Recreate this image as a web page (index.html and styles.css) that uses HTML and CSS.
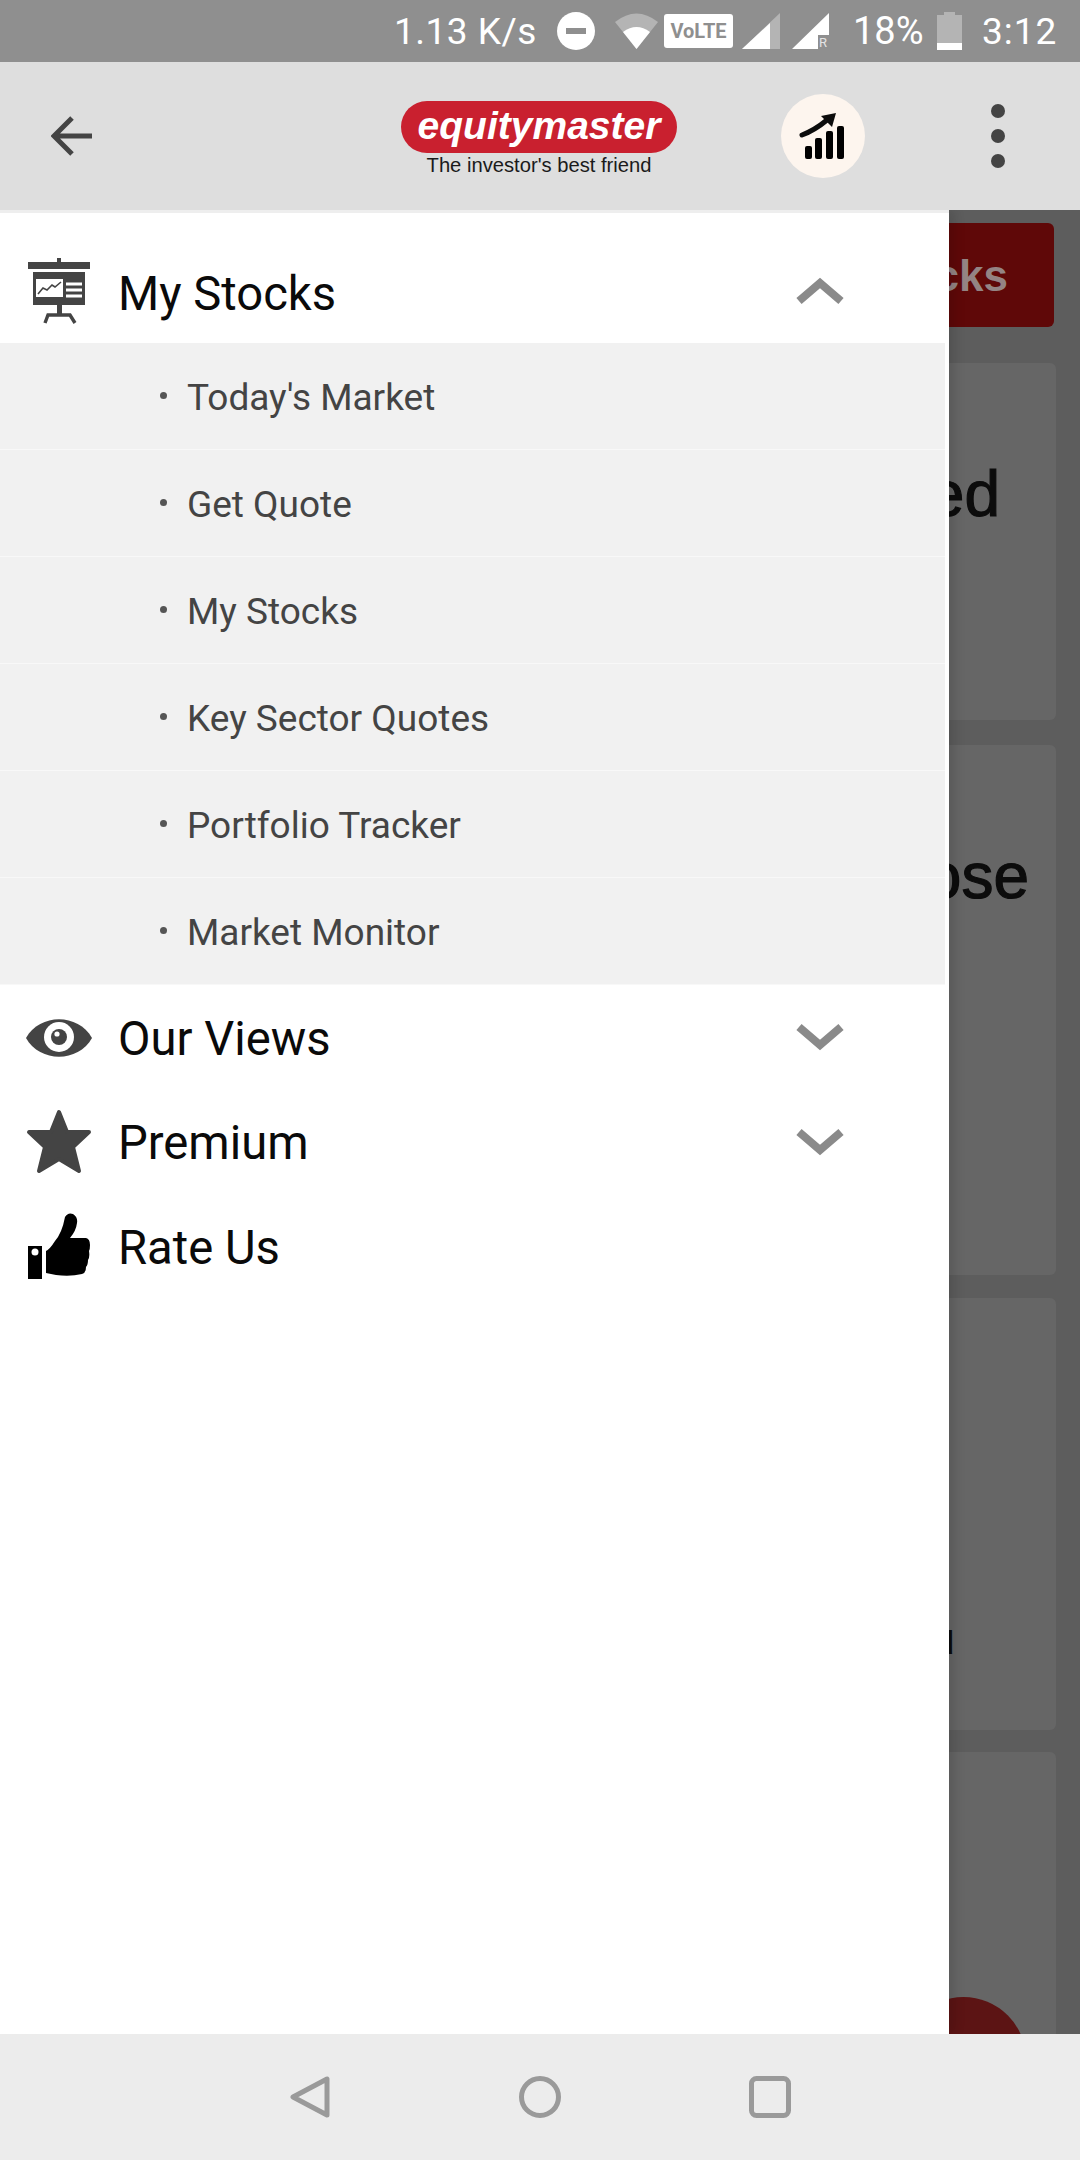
FILE: index.html
```html
<!DOCTYPE html>
<html lang="en">
<head>
 <meta charset="UTF-8">
 <meta name="viewport" content="width=device-width, initial-scale=1.0">
 <title>Equitymaster</title>
 <link rel="stylesheet" href="styles.css">
</head>
<body>
 <div class="status-bar">
  <span class="speed">1.13 K/s</span>
  <svg class="st-dnd" width="38" height="38" viewBox="0 0 38 38"><circle cx="19" cy="19" r="19" fill="#fff"/><rect x="9" y="16" width="20" height="6" fill="#8f8f8f"/></svg>
  <svg class="st-wifi" width="43" height="36" viewBox="0 0 43 36"><path d="M0 9 Q21.5 -8 43 9 L21.5 36 Z" fill="#b4b4b4"/><path d="M8 19 Q21.5 9 35 19 L21.5 36 Z" fill="#fff"/></svg>
  <span class="st-volte">VoLTE</span>
  <svg class="st-sig" width="38" height="36" viewBox="0 0 38 36"><path d="M38 0 V36 H0 Z" fill="#b4b4b4"/><path d="M28 10 V36 H0 Z" fill="#fff"/></svg>
  <svg class="st-sig2" width="37" height="36" viewBox="0 0 37 36"><path d="M37 0 V22 H26 V36 H0 Z" fill="#fff"/><text x="27" y="34" font-size="13" fill="#e4e4e4" font-family="Roboto, sans-serif">R</text></svg>
  <span class="st-pct">18%</span>
  <svg class="st-batt" width="25" height="38" viewBox="0 0 25 38"><rect x="7" y="0" width="11" height="4" fill="#b4b4b4"/><rect x="0" y="3" width="25" height="28" fill="#b4b4b4"/><rect x="0" y="31" width="25" height="7" fill="#fff"/></svg>
  <span class="st-time">3:12</span>
 </div>

 <div class="header">
  <svg class="back" width="42" height="42" viewBox="0 0 42 42"><path d="M41 21 H4 M21 3 L3 21 L21 39" fill="none" stroke="#444" stroke-width="5"/></svg>
  <div class="logo">
   <div class="logo-pill">equitymaster</div>
   <div class="logo-tag">The investor's best friend</div>
  </div>
  <div class="chart-btn">
   <svg width="48" height="48" viewBox="0 0 48 48"><path d="M3 23 Q16 18 28 8" fill="none" stroke="#0c0c0c" stroke-width="5" stroke-linecap="round"/><path d="M22 4 L37 1 L33 15 Z" fill="#0c0c0c"/><rect x="6" y="34" width="7" height="13" rx="2"/><rect x="16" y="26" width="7" height="21" rx="2"/><rect x="27" y="19" width="7" height="28" rx="2"/><rect x="38" y="14" width="7" height="33" rx="2"/></svg>
  </div>
  <div class="dots"><i></i><i></i><i></i></div>
 </div>

 <div class="page">
  <div class="page-btn"><span>My Stocks</span></div>
  <div class="card card-a"><span class="card-title">Viewed</span></div>
  <div class="card card-b"><span class="card-title">Choose</span></div>
  <div class="card card-c"><span class="card-small">Menu</span></div>
  <div class="card card-d"></div>
  <div class="fab"></div>

  <div class="drawer">
   <div class="item item-open">
    <svg class="item-icon" width="62" height="66" viewBox="0 0 62 66">
     <rect x="29" y="0" width="4" height="5" fill="#444"/>
     <rect x="0" y="4" width="62" height="7" fill="#444"/>
     <rect x="5" y="14" width="52" height="33" fill="#444"/>
     <rect x="8" y="21" width="27" height="18" fill="#fff"/>
     <path d="M10 36 L15 30 L19 32 L24 27 L27 29 L33 24" fill="none" stroke="#444" stroke-width="1.6"/>
     <path d="M38 26 H54 M38 32 H54 M38 38 H54" stroke="#fff" stroke-width="3"/>
     <rect x="29" y="47" width="5" height="10" fill="#444"/>
     <path d="M17 65 L20 57 H42 L47 65" fill="none" stroke="#444" stroke-width="3.4"/>
    </svg>
    <span class="item-label">My Stocks</span>
    <svg class="chev" width="48" height="28" viewBox="0 0 48 28"><path d="M3 24 L24 6 L45 24" fill="none" stroke="#8a8a8a" stroke-width="8"/></svg>
   </div>
   <div class="sub">
    <div class="sub-row"><span>Today's Market</span></div>
    <div class="sub-row"><span>Get Quote</span></div>
    <div class="sub-row"><span>My Stocks</span></div>
    <div class="sub-row"><span>Key Sector Quotes</span></div>
    <div class="sub-row"><span>Portfolio Tracker</span></div>
    <div class="sub-row"><span>Market Monitor</span></div>
   </div>
   <div class="item item-views">
    <svg class="item-icon" width="66" height="38" viewBox="0 0 66 38">
     <path d="M0 19 C14 -6 52 -6 66 19 C52 44 14 44 0 19 Z" fill="#444"/>
     <circle cx="33" cy="18" r="15" fill="#fff"/>
     <circle cx="33" cy="18" r="8" fill="#444"/>
     <circle cx="31" cy="15" r="2.6" fill="#fff"/>
    </svg>
    <span class="item-label">Our Views</span>
    <svg class="chev" width="48" height="28" viewBox="0 0 48 28"><path d="M3 4 L24 22 L45 4" fill="none" stroke="#8a8a8a" stroke-width="8"/></svg>
   </div>
   <div class="item">
    <svg class="item-icon star" width="66" height="66" viewBox="0 0 66 66">
     <path d="M33 3 L41 23 H63 L47 38 L53 62 L33 50 L13 62 L19 38 L3 23 H25 Z" fill="#444" stroke="#444" stroke-width="4" stroke-linejoin="round"/>
    </svg>
    <span class="item-label">Premium</span>
    <svg class="chev" width="48" height="28" viewBox="0 0 48 28"><path d="M3 4 L24 22 L45 4" fill="none" stroke="#8a8a8a" stroke-width="8"/></svg>
   </div>
   <div class="item">
    <svg class="item-icon thumb" width="62" height="66" viewBox="0 0 62 66">
     <rect x="0" y="33" width="14" height="33" fill="#000"/>
     <circle cx="7" cy="39" r="3.5" fill="#fff"/>
     <path d="M18 60 V38 Q22 36 27 28 Q34 20 37 4 Q40 -1 45 1 Q50 4 49 10 Q48 18 42 25 H58 Q62 26 62 32 Q62 36 61 38 Q62 44 60 47 Q60 52 58 54 Q58 60 54 61 Q42 64 28 62 Z" fill="#000"/>
    </svg>
    <span class="item-label">Rate Us</span>
   </div>
  </div>
 </div>

 <div class="nav-bar">
  <svg width="40" height="42" viewBox="0 0 40 42"><path d="M3 21 L37 3 V39 Z" fill="none" stroke="#9a9a9a" stroke-width="5" stroke-linejoin="round"/></svg>
  <svg width="42" height="42" viewBox="0 0 42 42"><circle cx="21" cy="21" r="18.5" fill="none" stroke="#9a9a9a" stroke-width="5"/></svg>
  <svg width="42" height="42" viewBox="0 0 42 42"><rect x="2.500" y="2.500" width="37" height="37" rx="5" fill="none" stroke="#9a9a9a" stroke-width="5"/></svg>
 </div>
</body>
</html>
```

FILE: styles.css
```css
* {
margin: 0;
padding: 0;
box-sizing: border-box;
}

body {
width: 1080px;
height: 2160px;
display: flex;
flex-direction: column;
overflow: hidden;
font-family: Roboto, 'Liberation Sans', sans-serif;
background: #fff;
}

svg {
display: block;
flex-shrink: 0;
}

/* status bar */
.status-bar {
height: 62px;
flex-shrink: 0;
display: flex;
align-items: center;
padding-left: 394px;
background: #8f8f8f;
color: #fff;
font-size: 37px;
}

.speed { width: 140px; white-space: nowrap; letter-spacing: 0.5px; }
.st-dnd { margin-left: 23px; }
.st-wifi { margin-left: 20px; }

.st-volte {
margin-left: 6px;
width: 69px;
height: 34px;
display: flex;
align-items: center;
justify-content: center;
background: #fff;
border-radius: 3px;
color: #8f8f8f;
font-size: 20px;
font-weight: 700;
}

.st-sig { margin-left: 9px; }
.st-sig2 { margin-left: 12px; }
.st-pct { margin-left: 24px; width: 72px; font-size: 38px; }
.st-batt { margin-left: 12px; }
.st-time { margin-left: 20px; letter-spacing: 1px; }

/* app header */
.header {
height: 148px;
flex-shrink: 0;
display: flex;
align-items: center;
padding-left: 50px;
background: #dedede;
}

.back { position: relative; left: 1px; }

.logo {
margin-left: 309px;
width: 276px;
padding-top: 6px;
display: flex;
flex-direction: column;
align-items: center;
}

.logo-pill {
width: 276px;
height: 52px;
border-radius: 26px;
background: #c9202f;
color: #fff;
font-family: 'Liberation Sans', Arial, sans-serif;
font-size: 39px;
font-weight: 700;
font-style: italic;
line-height: 50px;
text-align: center;
}

.logo-tag {
margin-top: 0;
font-family: 'Liberation Sans', Arial, sans-serif;
font-size: 20.200px;
line-height: 24px;
color: #1a1a1a;
white-space: nowrap;
}

.chart-btn {
margin-left: 104px;
width: 84px;
height: 84px;
border-radius: 50%;
background: #fdf5ee;
display: flex;
align-items: center;
justify-content: center;
}

.dots {
margin-left: 126px;
display: flex;
flex-direction: column;
gap: 11px;
}

.dots i {
display: block;
width: 14px;
height: 14px;
border-radius: 50%;
background: #444;
}

/* dimmed page behind the drawer */
.page {
position: relative;
flex: 1;
min-height: 0;
overflow: hidden;
padding-top: 13px;
background: #5d5d5d;
}

.page-btn {
width: 300px;
height: 104px;
margin-left: 754px;
border-radius: 6px;
background: #5f0808;
color: #948484;
font-family: 'Liberation Sans', Arial, sans-serif;
font-size: 44px;
font-weight: 700;
line-height: 106px;
text-align: right;
padding-right: 46px;
white-space: nowrap;
}

.card {
width: 400px;
margin-left: 656px;
border-radius: 6px;
background: #666;
text-align: right;
white-space: nowrap;
color: #0c0c0c;
font-family: 'Liberation Sans', Arial, sans-serif;
}

.card-a { height: 357px; margin-top: 36px; padding: 94px 56px 0 0; }
.card-b { height: 530px; margin-top: 25px; padding: 94px 27px 0 0; }
.card-c { height: 432px; margin-top: 23px; padding: 316px 101px 0 0; }
.card-d { height: 400px; margin-top: 22px; }

.card-title { font-size: 64px; -webkit-text-stroke: 1.2px #0c0c0c; }
.card-small { font-size: 44px; }

.fab {
position: absolute;
left: 901px;
top: 1787px;
width: 125px;
height: 125px;
border-radius: 50%;
background: #5c1414;
}

/* drawer */
.drawer {
position: absolute;
left: 0;
top: 0;
bottom: 0;
width: 949px;
background: #fff;
border-top: 3px solid #eeeeee;
box-shadow: 6px 0 10px rgba(0, 0, 0, 0.12);
}

.item {
height: 105px;
display: flex;
align-items: center;
position: relative;
padding-left: 118px;
}

.item-open {
height: 130px;
padding-top: 31px;
}

.item-views {
padding-top: 2px;
}

.item-icon {
position: absolute;
left: 26px;
top: 50%;
transform: translateY(-50%);
}

.item-open .item-icon {
top: 45px;
left: 28px;
transform: none;
}

.star {
margin-top: -1px;
}

.thumb {
left: 28px;
margin-top: -2px;
}

.item-label {
font-size: 47.200px;
color: #0a0a0a;
}

.chev {
position: absolute;
left: 796px;
top: 38px;
}

.item-open .chev {
top: 64px;
}

.sub {
margin-right: 4px;
background: #f1f1f1;
}

.sub-row {
height: 107px;
display: flex;
align-items: center;
padding: 3px 0 0 187px;
border-bottom: 1px solid #f8f8f8;
position: relative;
font-size: 37px;
color: #444;
}

.sub-row::before {
content: '';
position: absolute;
left: 160px;
top: 50%;
width: 7px;
height: 7px;
margin-top: -4px;
border-radius: 50%;
background: #555;
}

/* android nav */
.nav-bar {
height: 126px;
flex-shrink: 0;
display: flex;
align-items: center;
padding-left: 290px;
gap: 188px;
background: #ececec;
position: relative;
}

.nav-bar svg:first-child {
margin-right: 1px;
}
```
